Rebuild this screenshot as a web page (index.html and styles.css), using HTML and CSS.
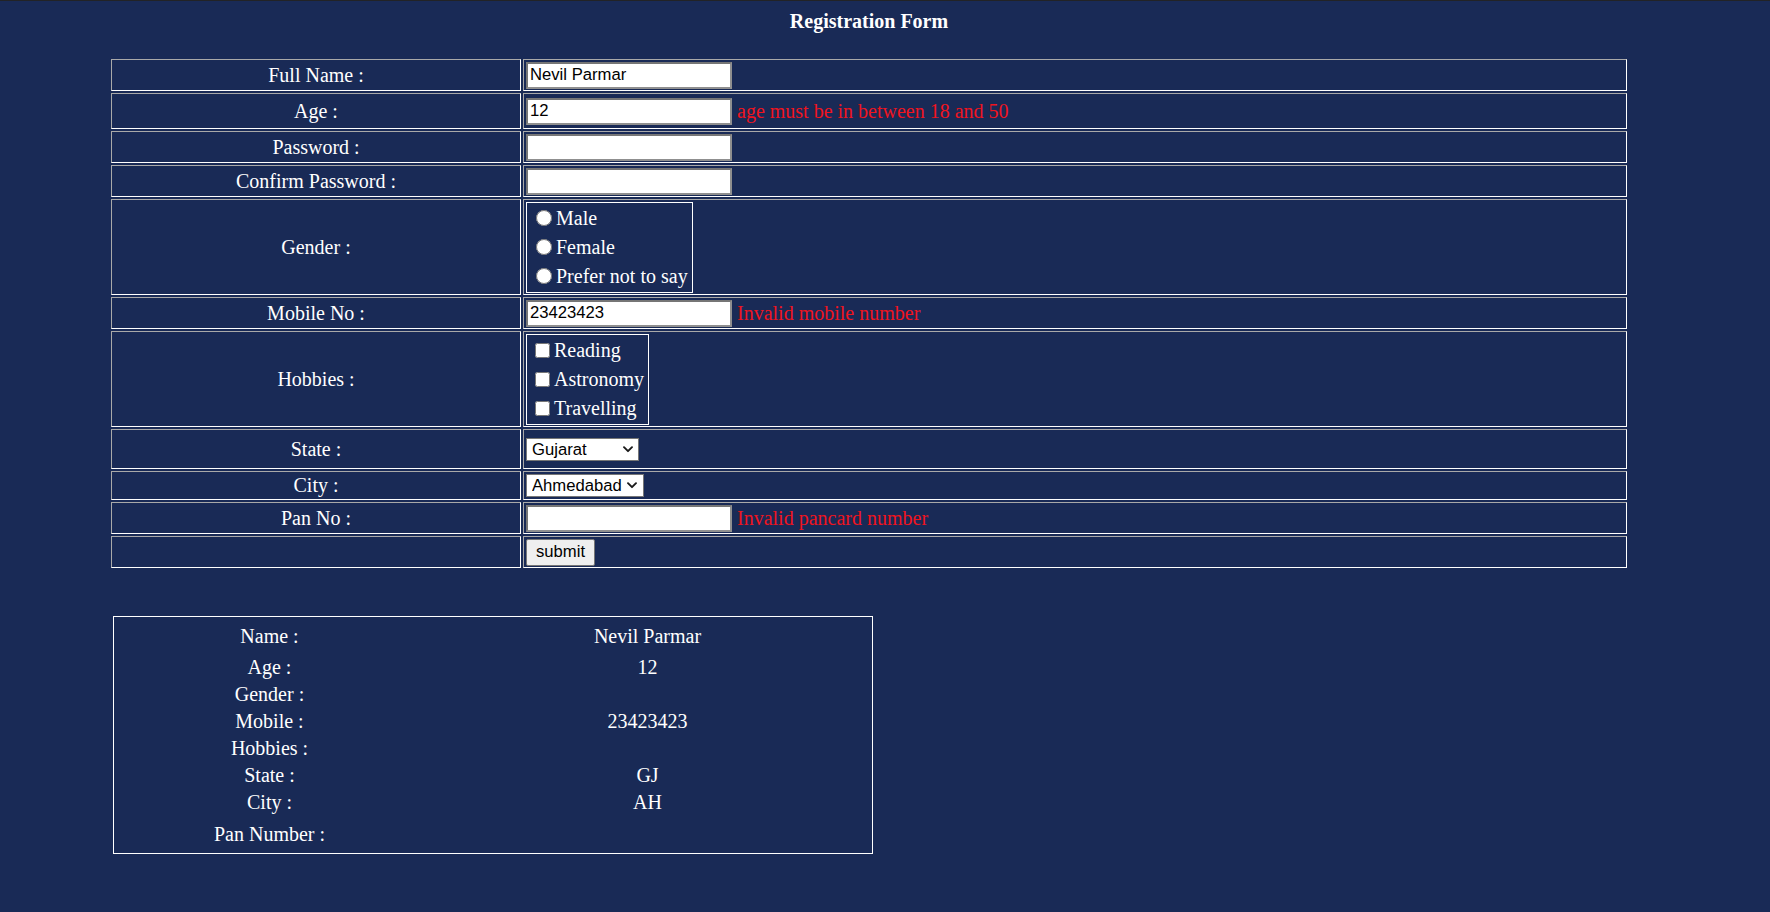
FILE: index.html
```html
<!DOCTYPE html>
<html lang="en">
<head>
<meta charset="utf-8">
<title>Registration Form</title>
<link rel="stylesheet" href="styles.css">
</head>
<body>
<div class="page">
  <div class="form-wrap">
    <h1 class="title">Registration Form</h1>
    <form class="form-grid" onsubmit="return false;">
      <div class="cell label">Full Name :</div>
      <div class="cell value"><input class="text-input" type="text" value="Nevil Parmar"></div>

      <div class="cell label">Age :</div>
      <div class="cell value"><input class="text-input" type="text" value="12"><span class="error">age must be in between 18 and 50</span></div>

      <div class="cell label">Password :</div>
      <div class="cell value"><input class="text-input" type="password"></div>

      <div class="cell label">Confirm Password :</div>
      <div class="cell value"><input class="text-input" type="password"></div>

      <div class="cell label">Gender :</div>
      <div class="cell value">
        <div class="options">
          <label class="opt"><input class="radio" type="radio" name="gender">Male</label>
          <label class="opt"><input class="radio" type="radio" name="gender">Female</label>
          <label class="opt"><input class="radio" type="radio" name="gender">Prefer not to say</label>
        </div>
      </div>

      <div class="cell label">Mobile No :</div>
      <div class="cell value"><input class="text-input" type="text" value="23423423"><span class="error">Invalid mobile number</span></div>

      <div class="cell label">Hobbies :</div>
      <div class="cell value">
        <div class="options">
          <label class="opt"><input class="check" type="checkbox">Reading</label>
          <label class="opt"><input class="check" type="checkbox">Astronomy</label>
          <label class="opt"><input class="check" type="checkbox">Travelling</label>
        </div>
      </div>

      <div class="cell label">State :</div>
      <div class="cell value">
        <span class="select-wrap">
          <select class="select state">
            <option>Gujarat</option>
            <option>Maharashtra</option>
          </select>
          <svg class="chevron state-chev" width="10" height="7" viewBox="0 0 10 7" aria-hidden="true"><path d="M1 1.2 L5 5.2 L9 1.2" fill="none" stroke="#1a1a1a" stroke-width="1.9" stroke-linecap="round" stroke-linejoin="round"/></svg>
        </span>
      </div>

      <div class="cell label">City :</div>
      <div class="cell value">
        <span class="select-wrap">
          <select class="select city">
            <option>Ahmedabad</option>
            <option>Surat</option>
          </select>
          <svg class="chevron city-chev" width="10" height="7" viewBox="0 0 10 7" aria-hidden="true"><path d="M1 1.2 L5 5.2 L9 1.2" fill="none" stroke="#1a1a1a" stroke-width="1.9" stroke-linecap="round" stroke-linejoin="round"/></svg>
        </span>
      </div>

      <div class="cell label">Pan No :</div>
      <div class="cell value"><input class="text-input" type="text"><span class="error">Invalid pancard number</span></div>

      <div class="cell label"></div>
      <div class="cell value"><button class="submit" type="submit">submit</button></div>
    </form>
  </div>

  <div class="summary">
    <div class="s-cell">Name :</div><div class="s-cell">Nevil Parmar</div>
    <div class="s-cell">Age :</div><div class="s-cell">12</div>
    <div class="s-cell">Gender :</div><div class="s-cell"></div>
    <div class="s-cell">Mobile :</div><div class="s-cell">23423423</div>
    <div class="s-cell">Hobbies :</div><div class="s-cell"></div>
    <div class="s-cell">State :</div><div class="s-cell">GJ</div>
    <div class="s-cell">City :</div><div class="s-cell">AH</div>
    <div class="s-cell">Pan Number :</div><div class="s-cell"></div>
  </div>
</div>
</body>
</html>
```

FILE: styles.css
```css
html, body {
  margin: 0;
  padding: 0;
}

body {
  background: #192a56;
  color: #ffffff;
  font-family: "Liberation Serif", "Times New Roman", serif;
  font-size: 20px;
  line-height: 23px;
}

.page {
  border-top: 1px solid #222326;
  padding: 9px 0 40px 111px;
}

.form-wrap {
  width: 1516px;
}

.title {
  margin: 0;
  font-size: 20px;
  font-weight: bold;
  line-height: 23px;
  text-align: center;
}

.form-grid {
  margin: 26px 0 0 0;
  display: grid;
  grid-template-columns: 410px 1104px;
  grid-template-rows: 32px 36px 32px 32px 96px 32px 96px 40px 29px 32px 32px;
  gap: 2px;
}

.cell {
  box-sizing: border-box;
  border: 1px solid;
  border-color: #a9a9a9 #ffffff #ffffff #a9a9a9;
  display: flex;
  align-items: center;
}

.label {
  justify-content: center;
}

.value {
  padding-left: 2px;
}

.text-input {
  box-sizing: border-box;
  width: 206px;
  height: 27px;
  margin: 0;
  padding: 0 2px;
  border: 2px solid;
  border-color: #767676 #8f8f8f #8f8f8f #767676;
  background: #ffffff;
  color: #000000;
  font-family: "Liberation Sans", Arial, sans-serif;
  font-size: 16.67px;
  outline: none;
}

.error {
  color: #f0141e;
  margin-left: 5px;
  white-space: nowrap;
}

.options {
  border: 1px solid #ffffff;
  padding: 1px 4px 1px 3px;
  display: flex;
  flex-direction: column;
}

.opt {
  height: 29px;
  display: flex;
  align-items: center;
  white-space: nowrap;
}

.radio {
  width: 16px;
  height: 16px;
  margin: 0 4px 0 6px;
}

.check {
  width: 15px;
  height: 15px;
  margin: 0 4px 0 5px;
}

.select-wrap {
  position: relative;
  display: inline-flex;
}

.select {
  box-sizing: border-box;
  height: 23px;
  margin: 0;
  padding: 0 0 0 5px;
  border: 1px solid #767676;
  border-radius: 0;
  background: #ffffff;
  color: #000000;
  font-family: "Liberation Sans", Arial, sans-serif;
  font-size: 16.67px;
  -webkit-appearance: none;
  appearance: none;
}

.state {
  width: 113px;
}

.city {
  width: 118px;
}

.chevron {
  position: absolute;
  top: 8px;
  pointer-events: none;
}

.state-chev {
  right: 6px;
}

.city-chev {
  right: 7px;
}

.submit {
  box-sizing: border-box;
  width: 69px;
  height: 27px;
  margin: 0;
  padding: 0 6px;
  background: #efefef;
  border: 1px solid #767676;
  border-radius: 2px;
  color: #000000;
  font-family: "Liberation Sans", Arial, sans-serif;
  font-size: 16.67px;
}

.summary {
  box-sizing: border-box;
  width: 760px;
  margin: 48px 0 0 2px;
  border: 1px solid #ffffff;
  padding: 2px;
  display: grid;
  grid-template-columns: 307px 445px;
  grid-template-rows: 34px 25px 25px 25px 25px 25px 25px 34px;
  gap: 2px;
}

.s-cell {
  display: flex;
  align-items: center;
  justify-content: center;
  white-space: nowrap;
}
```
